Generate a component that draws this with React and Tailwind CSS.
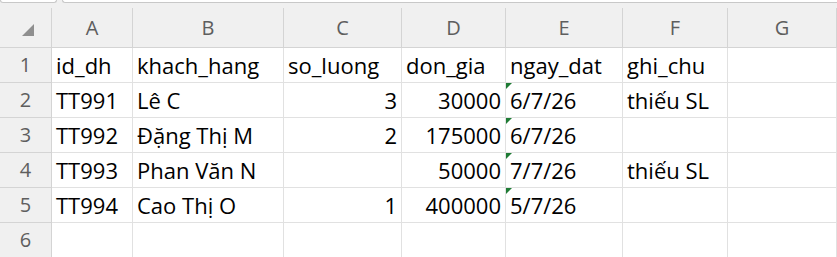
const columns = ['A', 'B', 'C', 'D', 'E', 'F', 'G'];

const rows = [
  ['id_dh', 'khach_hang', 'so_luong', 'don_gia', 'ngay_dat', 'ghi_chu', ''],
  ['TT991', 'Lê C', '3', '30000', '6/7/26', 'thiếu SL', ''],
  ['TT992', 'Đặng Thị M', '2', '175000', '6/7/26', '', ''],
  ['TT993', 'Phan Văn N', '', '50000', '7/7/26', 'thiếu SL', ''],
  ['TT994', 'Cao Thị O', '1', '400000', '5/7/26', '', ''],
  ['', '', '', '', '', '', ''],
];

const gridCols = 'grid grid-cols-[52px_81px_151px_118px_104px_117px_105px_1fr]';

function Cell({ value, col, row }) {
  // numbers sit on the right, text on the left, dates stored as text get the green flag
  const numeric = row > 0 && (col === 2 || col === 3);
  const flagged = row > 0 && col === 4 && value;
  return (
    <div
      className={`relative h-[35px] flex items-center border-r border-b border-[#e1e1e1] bg-white px-[4px] whitespace-nowrap overflow-visible ${
        numeric ? 'justify-end' : 'justify-start'
      }`}
    >
      {flagged && (
        <svg className="absolute left-0 top-0" width="6" height="6" viewBox="0 0 6 6">
          <path d="M0 0H6L0 6Z" fill="#1e7b34" />
        </svg>
      )}
      <span>{value}</span>
    </div>
  );
}

export default function App() {
  return (
    <div
      className="w-[837px] h-[257px] overflow-hidden bg-[#f0f0f0] text-[22px] text-black leading-none"
      style={{ fontFamily: '"Open Sans", "Noto Sans", sans-serif' }}
    >
      {/* bottom edges of the name box and formula bar */}
      <div className="flex h-[3px] gap-[5px]">
        <div className="w-[57px] bg-white border border-t-0 border-[#c8c8c8] rounded-b-[3px]" />
        <div className="flex-1 bg-white border border-t-0 border-r-0 border-[#c8c8c8] rounded-bl-[3px]" />
      </div>
      <div className="h-[5px]" />

      {/* column letters */}
      <div className={`${gridCols} h-[40px]`}>
        <div className="relative border-r border-b border-[#d4d4d4]">
          <svg className="absolute left-[22px] top-[16px]" width="12" height="12" viewBox="0 0 12 12">
            <path d="M12 0V12H0Z" fill="#8f8f8f" />
          </svg>
        </div>
        {columns.map((c) => (
          <div
            key={c}
            className="flex items-center justify-center border-r border-b border-[#d4d4d4] text-[#5e5e5e] text-[20px]"
          >
            {c}
          </div>
        ))}
      </div>

      {rows.map((r, i) => (
        <div key={i} className={gridCols}>
          <div className="h-[35px] flex items-center justify-center border-r border-b border-[#d4d4d4] text-[#5e5e5e] text-[20px]">
            {i + 1}
          </div>
          {r.map((v, j) => (
            <Cell key={j} value={v} col={j} row={i} />
          ))}
        </div>
      ))}
    </div>
  );
}
